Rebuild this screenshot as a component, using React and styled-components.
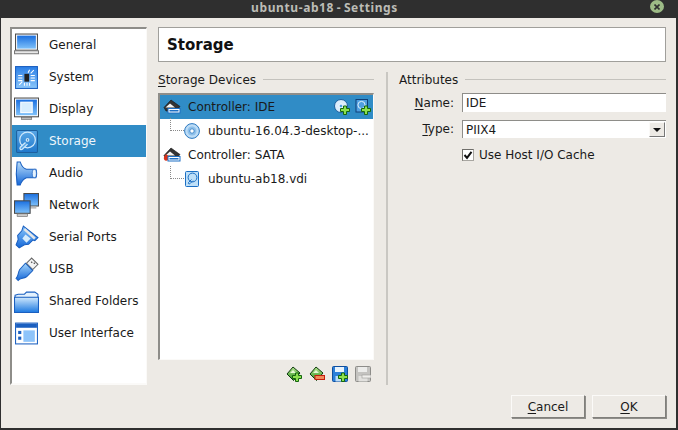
import React from "react"
import styled, { createGlobalStyle } from "styled-components"

const GlobalStyle = createGlobalStyle`
  html, body {
    margin: 0;
    padding: 0;
    background: #2f2f2f;
  }
  * {
    box-sizing: border-box;
  }
`

const Window = styled.div`
  width: 678px;
  height: 430px;
  display: flex;
  flex-direction: column;
  background: #edeae5;
  border-left: 1px solid #2f2f2f;
  border-right: 2px solid #2f2f2f;
  border-bottom: 2px solid #2f2f2f;
  font-family: "DejaVu Sans", sans-serif;
  font-size: 12px;
  color: #1a1a1a;
  overflow: hidden;
`

const TitleBar = styled.div`
  height: 18px;
  flex: none;
  display: flex;
  align-items: center;
  justify-content: center;
  position: relative;
  padding: 0 28px 3px 0;
  background: #2f2f2f;
  color: #bcbcb6;
  font-family: "Noto Sans", sans-serif;
  font-weight: 700;
  font-size: 12px;
  letter-spacing: 0.6px;
  word-spacing: -1px;
`

const CloseButton = styled.div`
  position: absolute;
  right: 12px;
  top: 0;
  width: 14px;
  height: 13px;
  display: flex;
  align-items: center;
  justify-content: center;
  border-radius: 50%;
  background: #9dbb86;
  svg {
    width: 6px;
    height: 6px;
  }
`

const Body = styled.div`
  flex: 1;
  display: flex;
  flex-direction: column;
  padding: 9px 10px 10px 9px;
`

const Main = styled.div`
  display: flex;
  gap: 11px;
  height: 358px;
`

const Sidebar = styled.div`
  width: 137px;
  flex: none;
  background: #fff;
  border: 2px solid #8e8d89;
  border-right: 1px solid #fbfaf8;
  border-bottom: 2px solid #fbfaf8;
`

const NavItem = styled.div`
  height: 32px;
  display: flex;
  align-items: center;
  gap: 10px;
  padding-left: 2px;
  background: ${(p) => (p.$active ? "#308cc6" : "transparent")};
  color: ${(p) => (p.$active ? "#eef6fb" : "#1a1a1a")};
  font-size: 12px;
  svg {
    flex: none;
    width: 25px;
    height: 25px;
  }
`

const NavLabel = styled.span`
  margin-top: -1px;
`

const Content = styled.div`
  flex: 1;
  display: flex;
  flex-direction: column;
  min-width: 0;
`

const Header = styled.div`
  height: 35px;
  flex: none;
  display: flex;
  align-items: center;
  padding-left: 8px;
  background: #fff;
  border: 1px solid #a09f9b;
  font-size: 15px;
  font-weight: 700;
  color: #111;
`

const Panes = styled.div`
  flex: 1;
  display: flex;
  margin-top: 10px;
`

const LeftPane = styled.div`
  width: 216px;
  flex: none;
  display: flex;
  flex-direction: column;
`

const Splitter = styled.div`
  width: 2px;
  flex: none;
  margin: 0 11px 0 12px;
  background: #c9c7c2;
`

const RightPane = styled.div`
  flex: 1;
  min-width: 0;
  display: flex;
  flex-direction: column;
`

const Section = styled.div`
  height: 15px;
  display: flex;
  align-items: center;
  gap: 7px;
  font-size: 12px;
  white-space: nowrap;
  &::after {
    content: "";
    flex: 1;
    height: 1px;
    background: #c4c2bd;
  }
`

const Mnemonic = styled.span`
  text-decoration: underline;
  text-underline-offset: 2px;
`

const Tree = styled.div`
  height: 267px;
  flex: none;
  margin-top: 6px;
  background: #fff;
  border: 2px solid #8e8d89;
  border-right: 1px solid #fbfaf8;
  border-bottom: 1px solid #fbfaf8;
`

const TreeRow = styled.div`
  height: 24px;
  display: flex;
  align-items: center;
  padding-left: ${(p) => (p.$child ? "10px" : "3px")};
  background: ${(p) => (p.$active ? "#308cc6" : "transparent")};
  color: #1a1a1a;
  font-size: 12px;
  white-space: nowrap;
  svg {
    flex: none;
    width: ${(p) => (p.$child ? "16px" : "18px")};
    height: ${(p) => (p.$child ? "16px" : "18px")};
  }
`

const Connector = styled.span`
  width: 14px;
  height: 13px;
  flex: none;
  margin-top: -13px;
  border-left: 1px dotted #8a8a8a;
  border-bottom: 1px dotted #8a8a8a;
`

const RowLabel = styled.span`
  margin-top: -1px;
  margin-left: ${(p) => (p.$child ? "8px" : "7px")};
`

const RowActions = styled.div`
  margin-left: auto;
  margin-right: 2px;
  display: flex;
  gap: 5px;
  svg {
    width: 16px;
    height: 16px;
  }
`

const TreeToolbar = styled.div`
  display: flex;
  justify-content: flex-end;
  gap: 7px;
  margin-top: 6px;
  padding-right: 3px;
  svg {
    width: 16px;
    height: 16px;
  }
`

const Form = styled.div`
  display: grid;
  grid-template-columns: 55px 1fr;
  column-gap: 8px;
  row-gap: 8px;
  margin-top: 6px;
  align-items: center;
`

const FieldLabel = styled.div`
  text-align: right;
  font-size: 12px;
`

const Input = styled.div`
  height: 19px;
  display: flex;
  align-items: center;
  padding-left: 3px;
  background: #fff;
  border-top: 1px solid #8e8d89;
  border-left: 1px solid #8e8d89;
  font-size: 12px;
`

const Combo = styled(Input)`
  height: 18px;
  justify-content: space-between;
  padding-right: 1px;
`

const ComboArrow = styled.div`
  width: 16px;
  height: 15px;
  display: flex;
  align-items: center;
  justify-content: center;
  background: #edeae5;
  border: 1px solid;
  border-color: #fbfaf8 #777 #777 #fbfaf8;
  &::after {
    content: "";
    border-left: 4px solid transparent;
    border-right: 4px solid transparent;
    border-top: 4px solid #111;
  }
`

const CheckRow = styled.div`
  grid-column: 2;
  display: flex;
  align-items: center;
  gap: 5px;
  margin-top: 2px;
  font-size: 12px;
`

const CheckBox = styled.div`
  width: 12px;
  height: 12px;
  display: flex;
  background: #fff;
  border: 1px solid;
  border-color: #6f6e6a #a8a6a1 #a8a6a1 #6f6e6a;
  svg {
    width: 10px;
    height: 10px;
  }
`

const Footer = styled.div`
  display: flex;
  justify-content: flex-end;
  gap: 7px;
  margin-top: 10px;
`

const Button = styled.div`
  width: 74px;
  height: 23px;
  display: flex;
  align-items: center;
  justify-content: center;
  background: #edeae5;
  border: 1px solid;
  border-color: #fbfaf8 #807f7b #807f7b #fbfaf8;
  box-shadow: 1px 1px 0 #8e8d89;
  font-size: 12px;
`

const Grad = ({ id, a = "#9cd0fb", b = "#1467d8" }) => (
  <defs>
    <linearGradient id={id} x1="0" y1="0" x2="0" y2="1">
      <stop offset="0" stopColor={a} />
      <stop offset="1" stopColor={b} />
    </linearGradient>
  </defs>
)

const CloseIcon = () => (
  <svg viewBox="0 0 6 6">
    <path d="M0.5 0.5l5 5M5.5 0.5l-5 5" stroke="#2f2f2f" strokeWidth="1.6" />
  </svg>
)

const GeneralIcon = () => (
  <svg viewBox="0 0 24 24">
    <Grad id="g-gen" a="#1a6fe0" b="#7ec1fa" />
    <rect x="1.5" y="1" width="21" height="15.5" fill="#fff" stroke="#4a4a4a" />
    <rect x="3" y="2.5" width="18" height="12.5" fill="url(#g-gen)" />
    <path d="M0.5 17h23v3h-23z" fill="#e8e8e8" stroke="#777" />
  </svg>
)

const SystemIcon = () => (
  <svg viewBox="0 0 24 24">
    <Grad id="g-sys" a="#2a7ee6" b="#8cc8fb" />
    <rect x="1.5" y="1.5" width="21" height="21" fill="url(#g-sys)" stroke="#1a5fc0" />
    <rect x="10" y="8.5" width="4.5" height="7.5" fill="#222" />
    <path
      d="M4 10h4M4 12.5h4M4 15h4M16 10h4M16 12.5h4M16 15h4M15 4.5l-1.5 3M19 5l-3 3M5 19l3-3M10 17v3M12.5 17v3M15 17v3"
      stroke="#fff"
      strokeWidth="1"
      fill="none"
    />
  </svg>
)

const DisplayIcon = () => (
  <svg viewBox="0 0 24 24">
    <Grad id="g-dis" a="#1a6fe0" b="#7ec1fa" />
    <rect x="0.5" y="1" width="23" height="18" fill="#fff" stroke="#4a4a4a" />
    <rect x="2" y="2.5" width="20" height="15" fill="url(#g-dis)" />
    <rect x="6.5" y="5" width="11" height="10" fill="#d8eefe" stroke="#fff" />
    <rect x="7" y="19.5" width="10" height="2" fill="#bbb" stroke="#666" strokeWidth="0.6" />
  </svg>
)

const StorageIcon = () => (
  <svg viewBox="0 0 24 24">
    <Grad id="g-sto" a="#5aa7e6" b="#1f78cc" />
    <rect x="2.5" y="1.5" width="20" height="21" rx="1" fill="url(#g-sto)" stroke="#1c5f9e" />
    <g fill="none" stroke="#cfe8fb" strokeWidth="1.2">
      <circle cx="13" cy="10.5" r="7.5" />
      <circle cx="13" cy="10.5" r="1.2" fill="#1c5f9e" />
      <path d="M11 13l-5 4.5c-1 1.5 .5 3 2 2l5-5" fill="#5aa7e6" />
    </g>
  </svg>
)

const AudioIcon = () => (
  <svg viewBox="0 0 24 24">
    <Grad id="g-aud" a="#bcdffa" b="#1467d8" />
    <path d="M3 1h3c1 3 3 6 6 7h9c1 2 1 6 0 8h-9c-3 1-5 4-6 7H3c-1-7-1-15 0-22z" fill="url(#g-aud)" stroke="#1a5fc0" />
    <ellipse cx="19.5" cy="12" rx="2" ry="4" fill="#e6f3fd" stroke="#1a5fc0" strokeWidth="0.7" />
  </svg>
)

const NetworkIcon = () => (
  <svg viewBox="0 0 24 24">
    <Grad id="g-net" a="#1a6fe0" b="#7ec1fa" />
    <rect x="9.5" y="0.5" width="14" height="12" fill="url(#g-net)" stroke="#4a4a4a" />
    <rect x="15.5" y="13" width="6" height="2" fill="#bbb" />
    <rect x="0.5" y="7.5" width="15" height="12" fill="url(#g-net)" stroke="#4a4a4a" />
    <rect x="3" y="20" width="10" height="2.5" fill="#ccc" stroke="#666" strokeWidth="0.6" />
  </svg>
)

const SerialIcon = () => (
  <svg viewBox="0 0 24 24">
    <Grad id="g-ser" a="#8cc8fb" b="#1467d8" />
    <path d="M9 1l14 11-3 3-2-.5-4 4-4 .5-5 3-3-3 2-5-.5-4 4-4.5z" fill="url(#g-ser)" stroke="#1a5fc0" />
    <path d="M10 4l10 9" stroke="#e6e6e6" strokeWidth="2.4" />
    <path d="M11 9l5 4-4 4-4-4z" fill="#d6ecfd" />
  </svg>
)

const UsbIcon = () => (
  <svg viewBox="0 0 24 24">
    <Grad id="g-usb" a="#a6d7fc" b="#1467d8" />
    <path d="M17 1l6 6-5 5-6-6z" fill="#f4f4f4" stroke="#666" />
    <path d="M16.5 4.5l1 1M19 5.5l1 1" stroke="#555" strokeWidth="1.2" />
    <path d="M11 6l7 7-6 6c-3 2-6 1-8 3.5l-2-2c2.5-2 1.5-5 3.5-8.500z" fill="url(#g-usb)" stroke="#1a5fc0" />
  </svg>
)

const FolderIcon = () => (
  <svg viewBox="0 0 24 24">
    <Grad id="g-fol" a="#cfe8fd" b="#1c78e0" />
    <path d="M1 6l3-1h6l2-2h8l3 2v4H1z" fill="#e3f1fd" stroke="#1a5fc0" />
    <path d="M0.5 8h23v14.5H0.5z" fill="url(#g-fol)" stroke="#1a5fc0" />
  </svg>
)

const InterfaceIcon = () => (
  <svg viewBox="0 0 24 24">
    <rect x="1.5" y="2" width="21" height="20" fill="#fff" stroke="#1a5fc0" />
    <rect x="2" y="2.5" width="20" height="4" fill="#1a5fc0" />
    <rect x="9" y="9" width="11" height="11" fill="#8ec4fa" />
    <rect x="4" y="9.5" width="3" height="3" fill="#1a5fc0" />
    <rect x="4" y="15" width="3" height="3" fill="#1a5fc0" />
  </svg>
)

const ControllerIcon = ({ accent }) => (
  <svg viewBox="0 0 18 18">
    <path d="M8 2l9 6.5-4 4.5H3L1 9.5z" fill="#333" stroke="#111" strokeWidth="0.6" />
    <path d="M2.5 9.500L7 5.500l5 4z" fill="#f4f4f4" />
    {accent && <path d="M3 8c3 2 3 4 2 6-2 2-5 0-4-3z" fill={accent} />}
    <rect x="5" y="10.5" width="12" height="4.5" fill="#fff" stroke="#1c6fc4" />
    <rect x="6.5" y="12" width="9" height="1.5" fill="#1c6fc4" />
  </svg>
)

const Plus = ({ x = 8, y = 7 }) => (
  <path
    d={`M${x + 1.5} ${y}h3v2.5h3v3h-3V${y + 8.5}h-3v-3h-3v-3h3z`}
    fill="#8ce04e"
    stroke="#14660f"
    strokeWidth="1"
  />
)

const AddDiscIcon = () => (
  <svg viewBox="0 0 16 16">
    <circle cx="7" cy="7" r="6.5" fill="#dcedfb" stroke="#1c5f9e" />
    <circle cx="7" cy="7" r="2" fill="#4f9fe0" stroke="#fff" />
    <Plus />
  </svg>
)

const AddHddIcon = () => (
  <svg viewBox="0 0 16 16">
    <rect x="1" y="0.5" width="11.5" height="12.5" fill="#4f9fe0" stroke="#0f3f78" />
    <circle cx="6.5" cy="6" r="3.6" fill="none" stroke="#dff0fc" />
    <Plus />
  </svg>
)

const DiscIcon = () => (
  <svg viewBox="0 0 16 16">
    <circle cx="8" cy="8" r="7.4" fill="#bcdcf6" stroke="#2b78c0" />
    <circle cx="8" cy="8" r="4.5" fill="#8ec0ea" />
    <circle cx="8" cy="8" r="2.2" fill="#fff" stroke="#2b78c0" strokeWidth="0.8" />
  </svg>
)

const HddIcon = () => (
  <svg viewBox="0 0 16 16">
    <rect x="1.5" y="0.5" width="13" height="15" rx="1" fill="#bfe0f8" stroke="#1c6fc4" />
    <g fill="none" stroke="#1c6fc4">
      <circle cx="8.5" cy="6.5" r="4.4" />
      <path d="M7.5 8.5l-3 3c-.6 1 .4 1.8 1.4 1.2l3-3" />
    </g>
  </svg>
)

const ControllerSmall = ({ id, children }) => (
  <svg viewBox="0 0 16 16">
    <Grad id={id} a="#b6e68f" b="#2a8f1e" />
    <path d="M7 1l7 6-6.500 7.500L1 8z" fill={`url(#${id})`} stroke="#0d3a0d" />
    <path d="M4 7l3-3 3 3z" fill="#e4f7d4" />
    {children}
  </svg>
)

const AddControllerIcon = () => (
  <ControllerSmall id="g-cadd">
    <Plus />
  </ControllerSmall>
)

const RemoveControllerIcon = () => (
  <ControllerSmall id="g-crem">
    <rect x="6" y="9.5" width="9.5" height="4" fill="#f08a5a" stroke="#c41d0c" />
  </ControllerSmall>
)

const AddAttachmentIcon = () => (
  <svg viewBox="0 0 16 16">
    <rect x="0.5" y="0.5" width="15" height="15" rx="1" fill="#2b7fd8" stroke="#0f4f9f" />
    <rect x="3" y="1" width="9" height="5" fill="#e8f3fc" />
    <rect x="3.5" y="10" width="6" height="5.5" fill="#bcdcf6" />
    <Plus />
  </svg>
)

const RemoveAttachmentIcon = () => (
  <svg viewBox="0 0 16 16">
    <rect x="0.5" y="0.5" width="15" height="15" rx="1" fill="#c4c3c0" stroke="#8d8c89" />
    <rect x="3" y="1" width="9" height="5" fill="#ececea" />
    <rect x="3.5" y="10" width="9" height="5.5" fill="#e2e1de" />
    <rect x="7" y="9" width="9" height="3" fill="#efeeeb" stroke="#9a9996" strokeWidth="0.6" />
  </svg>
)

const CheckMark = () => (
  <svg viewBox="0 0 10 10">
    <path d="M1.5 5l2.5 2.8L8.5 1.8" fill="none" stroke="#111" strokeWidth="2" />
  </svg>
)

const navItems = [
  { name: "General", icon: GeneralIcon },
  { name: "System", icon: SystemIcon },
  { name: "Display", icon: DisplayIcon },
  { name: "Storage", icon: StorageIcon, active: true },
  { name: "Audio", icon: AudioIcon },
  { name: "Network", icon: NetworkIcon },
  { name: "Serial Ports", icon: SerialIcon },
  { name: "USB", icon: UsbIcon },
  { name: "Shared Folders", icon: FolderIcon },
  { name: "User Interface", icon: InterfaceIcon },
]

const App = () => {
  return (
    <>
      <GlobalStyle />
      <Window>
        <TitleBar>
          ubuntu-ab18 - Settings
          <CloseButton>
            <CloseIcon />
          </CloseButton>
        </TitleBar>
        <Body>
          <Main>
            <Sidebar>
              {navItems.map((item) => (
                <NavItem key={item.name} $active={item.active}>
                  <item.icon />
                  <NavLabel>{item.name}</NavLabel>
                </NavItem>
              ))}
            </Sidebar>
            <Content>
              <Header>Storage</Header>
              <Panes>
                <LeftPane>
                  <Section>
                    <span>
                      <Mnemonic>S</Mnemonic>torage Devices
                    </span>
                  </Section>
                  <Tree>
                    <TreeRow $active>
                      <ControllerIcon />
                      <RowLabel>Controller: IDE</RowLabel>
                      <RowActions>
                        <AddDiscIcon />
                        <AddHddIcon />
                      </RowActions>
                    </TreeRow>
                    <TreeRow $child>
                      <Connector />
                      <DiscIcon />
                      <RowLabel $child>ubuntu-16.04.3-desktop-...</RowLabel>
                    </TreeRow>
                    <TreeRow>
                      <ControllerIcon accent="#d8321c" />
                      <RowLabel>Controller: SATA</RowLabel>
                    </TreeRow>
                    <TreeRow $child>
                      <Connector />
                      <HddIcon />
                      <RowLabel $child>ubuntu-ab18.vdi</RowLabel>
                    </TreeRow>
                  </Tree>
                  <TreeToolbar>
                    <AddControllerIcon />
                    <RemoveControllerIcon />
                    <AddAttachmentIcon />
                    <RemoveAttachmentIcon />
                  </TreeToolbar>
                </LeftPane>
                <Splitter />
                <RightPane>
                  <Section>Attributes</Section>
                  <Form>
                    <FieldLabel>
                      <Mnemonic>N</Mnemonic>ame:
                    </FieldLabel>
                    <Input>IDE</Input>
                    <FieldLabel>
                      <Mnemonic>T</Mnemonic>ype:
                    </FieldLabel>
                    <Combo>
                      PIIX4
                      <ComboArrow />
                    </Combo>
                    <CheckRow>
                      <CheckBox>
                        <CheckMark />
                      </CheckBox>
                      Use Host I/O Cache
                    </CheckRow>
                  </Form>
                </RightPane>
              </Panes>
            </Content>
          </Main>
          <Footer>
            <Button>
              <span>
                <Mnemonic>C</Mnemonic>ancel
              </span>
            </Button>
            <Button>
              <span>
                <Mnemonic>O</Mnemonic>K
              </span>
            </Button>
          </Footer>
        </Body>
      </Window>
    </>
  )
}

export default App
